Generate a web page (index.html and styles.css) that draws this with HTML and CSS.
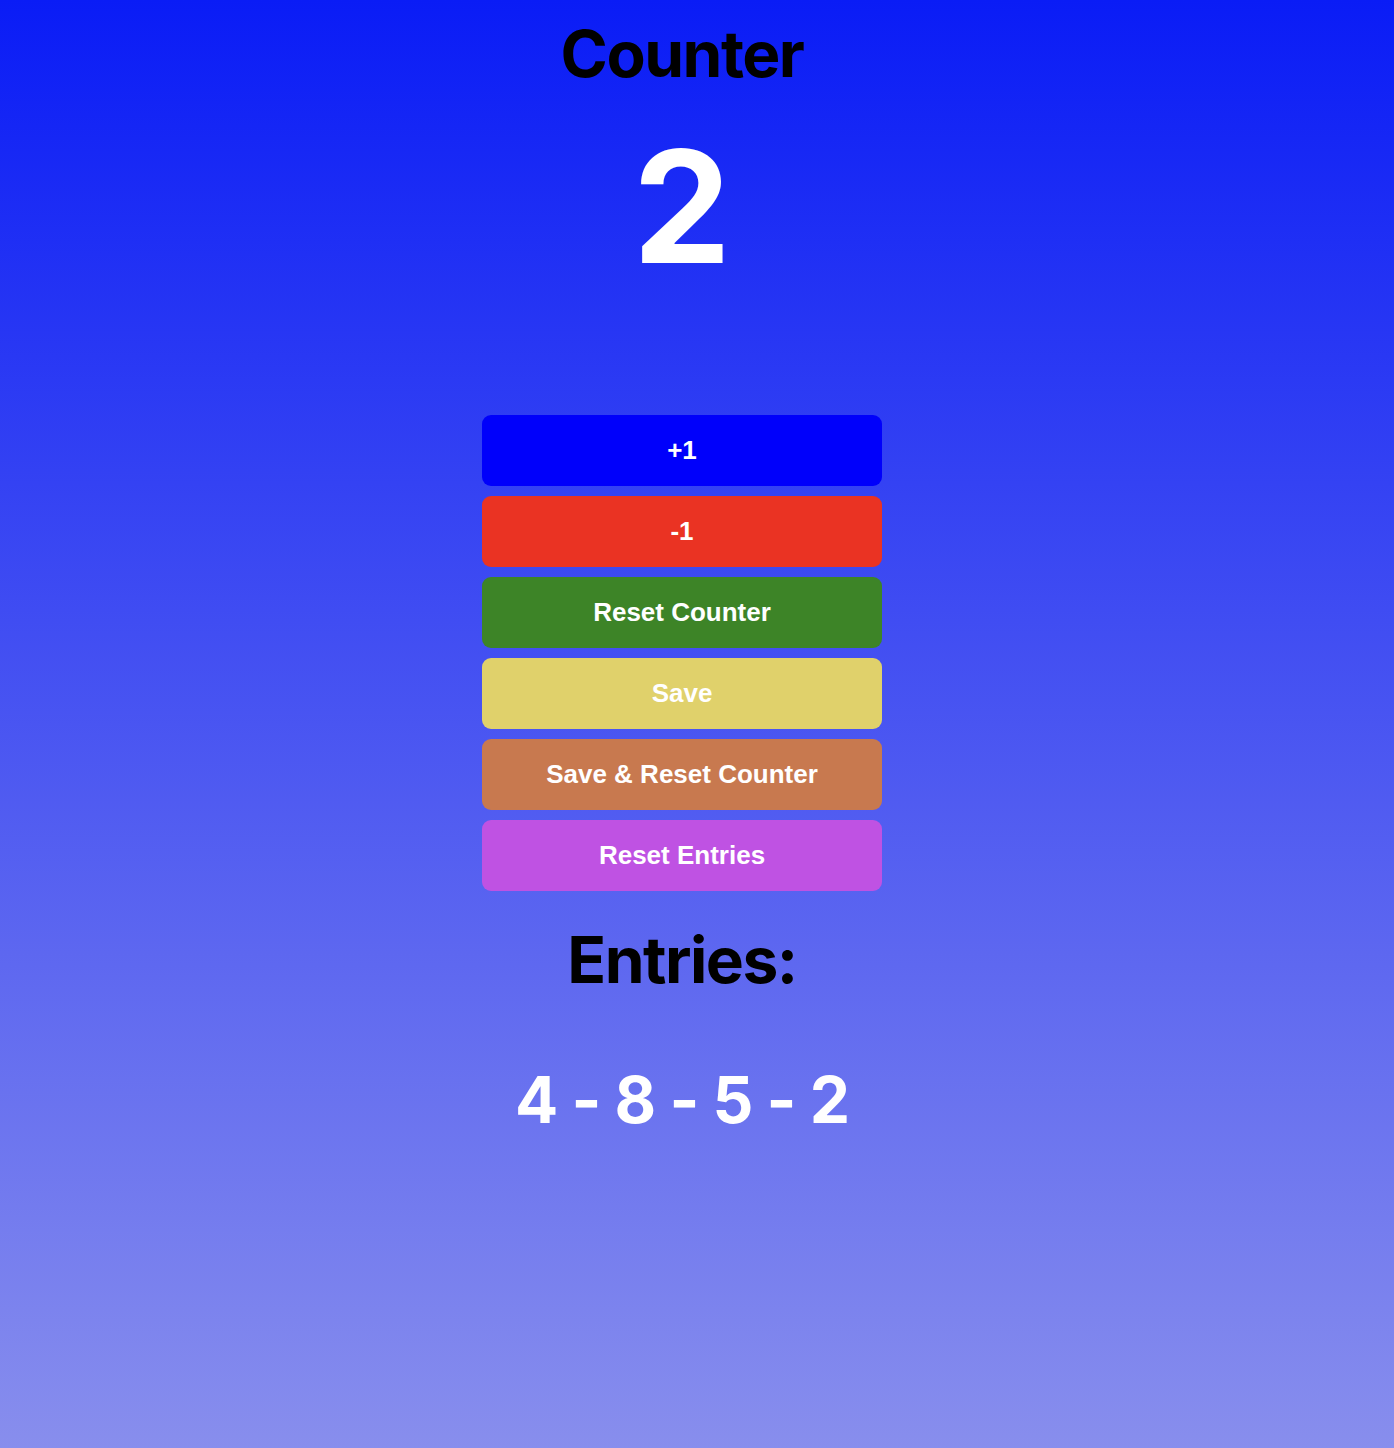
FILE: index.html
```html
<!DOCTYPE html>
<html lang="en">
<head>
<meta charset="utf-8">
<title>Counter</title>
<link rel="stylesheet" href="styles.css">
</head>
<body>
<main class="app">
  <h1 class="title">Counter</h1>
  <div class="count">2</div>
  <div class="buttons">
    <button class="btn btn-inc">+1</button>
    <button class="btn btn-dec">-1</button>
    <button class="btn btn-reset">Reset Counter</button>
    <button class="btn btn-save">Save</button>
    <button class="btn btn-save-reset">Save &amp; Reset Counter</button>
    <button class="btn btn-entries">Reset Entries</button>
  </div>
  <h2 class="entries-title">Entries:</h2>
  <p class="entries">4 - 8 - 5 - 2</p>
</main>
</body>
</html>
```
FILE: styles.css
```css
html, body {
  margin: 0;
  padding: 0;
}
body {
  min-height: 1448px;
  background: linear-gradient(180deg, rgb(10, 28, 246) 0%, rgb(136, 142, 237) 100%);
  font-family: Inter, "Noto Sans", sans-serif;
}
.app {
  display: flex;
  flex-direction: column;
  align-items: center;
  padding-right: 30px;
}
.title {
  margin: 15px 0 0;
  font-size: 64px;
  line-height: 77px;
  font-weight: 700;
  color: #000;
  letter-spacing: -1.5px;
}
.count {
  margin-top: 20px;
  font-size: 156px;
  line-height: 190px;
  font-weight: 700;
  color: #fff;
}
.buttons {
  margin-top: 113px;
  display: flex;
  flex-direction: column;
  gap: 10px;
  width: 400px;
}
.btn {
  height: 71px;
  border: none;
  border-radius: 9px;
  color: #fff;
  font-family: "Liberation Sans", Arial, sans-serif;
  font-weight: 700;
  font-size: 26px;
  padding: 0;
  cursor: pointer;
}
.btn-inc { background: #0000fb; }
.btn-dec { background: #ea3323; }
.btn-reset { background: #3d8427; }
.btn-save { background: #e0d16b; }
.btn-save-reset { background: #c8794f; }
.btn-entries { background: #bf52e3; }
.entries-title {
  margin: 30px 0 0;
  font-size: 64px;
  line-height: 77px;
  font-weight: 700;
  color: #000;
  letter-spacing: -1.5px;
}
.entries {
  margin: 63px 0 0;
  font-size: 64px;
  line-height: 77px;
  font-weight: 700;
  color: #fff;
  letter-spacing: -1px;
}
```
